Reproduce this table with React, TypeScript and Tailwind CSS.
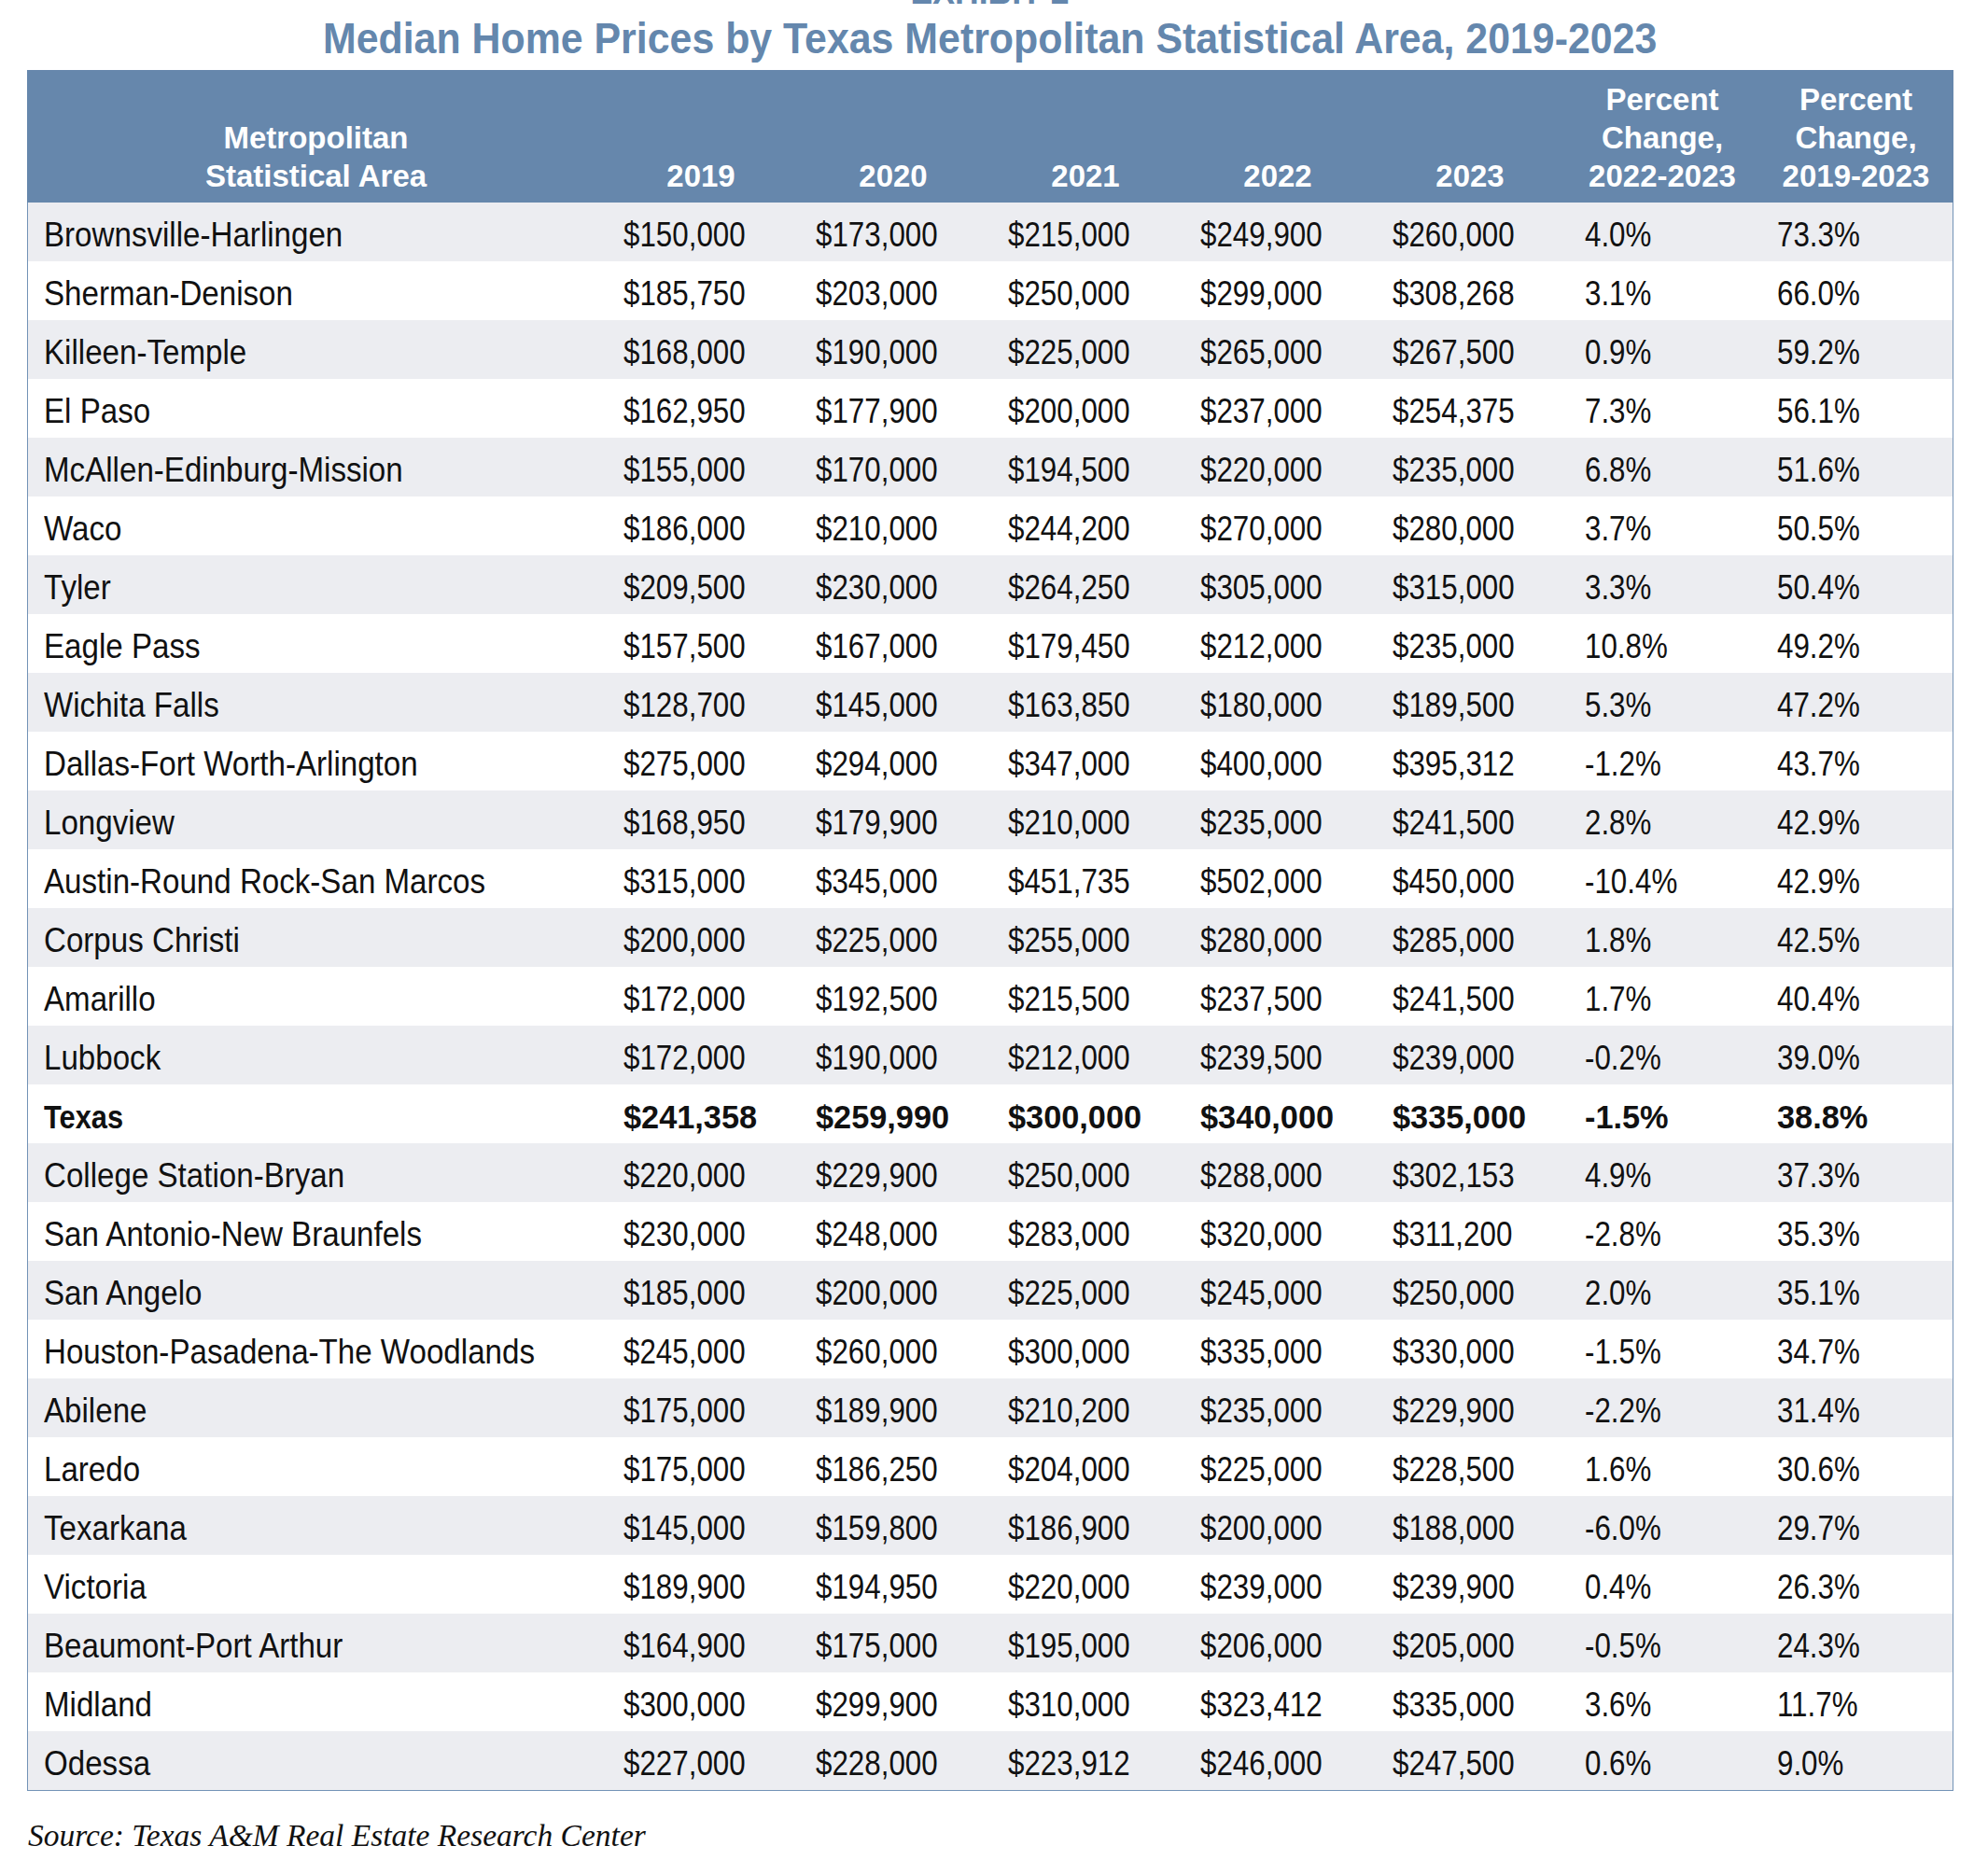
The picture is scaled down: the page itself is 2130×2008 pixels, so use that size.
const ROWS: [string, string, string, string, string, string, string, string][] = [
  ["Brownsville-Harlingen", "$150,000", "$173,000", "$215,000", "$249,900", "$260,000", "4.0%", "73.3%"],
  ["Sherman-Denison", "$185,750", "$203,000", "$250,000", "$299,000", "$308,268", "3.1%", "66.0%"],
  ["Killeen-Temple", "$168,000", "$190,000", "$225,000", "$265,000", "$267,500", "0.9%", "59.2%"],
  ["El Paso", "$162,950", "$177,900", "$200,000", "$237,000", "$254,375", "7.3%", "56.1%"],
  ["McAllen-Edinburg-Mission", "$155,000", "$170,000", "$194,500", "$220,000", "$235,000", "6.8%", "51.6%"],
  ["Waco", "$186,000", "$210,000", "$244,200", "$270,000", "$280,000", "3.7%", "50.5%"],
  ["Tyler", "$209,500", "$230,000", "$264,250", "$305,000", "$315,000", "3.3%", "50.4%"],
  ["Eagle Pass", "$157,500", "$167,000", "$179,450", "$212,000", "$235,000", "10.8%", "49.2%"],
  ["Wichita Falls", "$128,700", "$145,000", "$163,850", "$180,000", "$189,500", "5.3%", "47.2%"],
  ["Dallas-Fort Worth-Arlington", "$275,000", "$294,000", "$347,000", "$400,000", "$395,312", "-1.2%", "43.7%"],
  ["Longview", "$168,950", "$179,900", "$210,000", "$235,000", "$241,500", "2.8%", "42.9%"],
  ["Austin-Round Rock-San Marcos", "$315,000", "$345,000", "$451,735", "$502,000", "$450,000", "-10.4%", "42.9%"],
  ["Corpus Christi", "$200,000", "$225,000", "$255,000", "$280,000", "$285,000", "1.8%", "42.5%"],
  ["Amarillo", "$172,000", "$192,500", "$215,500", "$237,500", "$241,500", "1.7%", "40.4%"],
  ["Lubbock", "$172,000", "$190,000", "$212,000", "$239,500", "$239,000", "-0.2%", "39.0%"],
  ["Texas", "$241,358", "$259,990", "$300,000", "$340,000", "$335,000", "-1.5%", "38.8%"],
  ["College Station-Bryan", "$220,000", "$229,900", "$250,000", "$288,000", "$302,153", "4.9%", "37.3%"],
  ["San Antonio-New Braunfels", "$230,000", "$248,000", "$283,000", "$320,000", "$311,200", "-2.8%", "35.3%"],
  ["San Angelo", "$185,000", "$200,000", "$225,000", "$245,000", "$250,000", "2.0%", "35.1%"],
  ["Houston-Pasadena-The Woodlands", "$245,000", "$260,000", "$300,000", "$335,000", "$330,000", "-1.5%", "34.7%"],
  ["Abilene", "$175,000", "$189,900", "$210,200", "$235,000", "$229,900", "-2.2%", "31.4%"],
  ["Laredo", "$175,000", "$186,250", "$204,000", "$225,000", "$228,500", "1.6%", "30.6%"],
  ["Texarkana", "$145,000", "$159,800", "$186,900", "$200,000", "$188,000", "-6.0%", "29.7%"],
  ["Victoria", "$189,900", "$194,950", "$220,000", "$239,000", "$239,900", "0.4%", "26.3%"],
  ["Beaumont-Port Arthur", "$164,900", "$175,000", "$195,000", "$206,000", "$205,000", "-0.5%", "24.3%"],
  ["Midland", "$300,000", "$299,900", "$310,000", "$323,412", "$335,000", "3.6%", "11.7%"],
  ["Odessa", "$227,000", "$228,000", "$223,912", "$246,000", "$247,500", "0.6%", "9.0%"],
];

const HEADERS = [
  ["Metropolitan", "Statistical Area"],
  ["2019"],
  ["2020"],
  ["2021"],
  ["2022"],
  ["2023"],
  ["Percent", "Change,", "2022-2023"],
  ["Percent", "Change,", "2019-2023"],
];

// Arial is wider than the condensed face of the original, so cells are squeezed a little
export default function App() {
  return (
    <div className="relative h-[2008px] w-[2130px] overflow-hidden bg-white font-['Liberation_Sans','Arial',sans-serif]">
      <div className="ml-[29px] w-[2064px]">
        <p className="-mt-[30px] h-[40px] text-center text-[40px] font-bold leading-[40px] text-[#6487ad]">
          <span className="inline-block scale-x-[0.89] whitespace-nowrap">EXHIBIT 2</span>
        </p>
        <h1 className="mt-[7px] h-[47px] text-center text-[47px] font-bold leading-[47px] text-[#6487ad]">
          <span className="inline-block scale-x-[0.912] whitespace-nowrap">
            Median Home Prices by Texas Metropolitan Statistical Area, 2019-2023
          </span>
        </h1>

        <div className="mt-[11px] grid h-[142px] grid-cols-[619px_repeat(6,206px)_1fr] items-end bg-[#6687ac] pb-[8px] text-[33px] font-bold leading-[41px] text-white">
          {HEADERS.map((lines) => (
            <div key={lines.join(" ")} className="flex flex-col items-center">
              {lines.map((line) => (
                <span key={line} className="whitespace-nowrap">
                  {line}
                </span>
              ))}
            </div>
          ))}
        </div>

        <div className="border-x border-b border-[#7393b6] text-[36px] leading-[56px] text-[#111]">
          {ROWS.map((row, i) => {
            const isTexas = row[0] === "Texas";
            return (
              <div
                key={row[0]}
                className={`grid h-[63px] grid-cols-[618px_repeat(6,206px)_1fr] pt-[7px] ${i % 2 === 0 ? "bg-[#ecedf1]" : "bg-white"}`}
              >
                <div className="whitespace-nowrap pl-[17px]">
                  <span
                    className={`inline-block origin-left ${isTexas ? "scale-x-[0.88] text-[35px] font-bold" : "scale-x-[0.92]"}`}
                  >
                    {row[0]}
                  </span>
                </div>
                {row.slice(1).map((cell, j) => (
                  <div key={j} className="whitespace-nowrap pl-[20px]">
                    <span
                      className={`inline-block origin-left ${isTexas ? "scale-x-[0.98] text-[35px] font-bold" : "scale-x-[0.87]"}`}
                    >
                      {cell}
                    </span>
                  </div>
                ))}
              </div>
            );
          })}
        </div>

        <p className="mt-[31px] pl-[1px] font-['Liberation_Serif','Times_New_Roman',serif] text-[33.5px] italic leading-[33px] text-[#111]">
          Source: Texas A&amp;M Real Estate Research Center
        </p>
      </div>
    </div>
  );
}
